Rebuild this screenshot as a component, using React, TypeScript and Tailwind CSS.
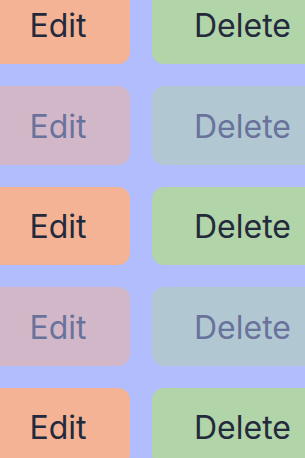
const rows = [false, true, false, true, false];

export default function App() {
  return (
    <div
      className="h-[458px] w-[305px] overflow-hidden bg-[#b1bdfd]"
      style={{ fontFamily: "Inter, 'Noto Sans', sans-serif" }}
    >
      <div className="-ml-[14px] -mt-[14.5px] flex flex-col gap-[22px]">
        {rows.map((disabled, i) => (
          <div key={i} className={`flex gap-[22px] ${disabled ? "opacity-50" : ""}`}>
            <button
              disabled={disabled}
              className="flex h-[78.5px] w-[144px] shrink-0 items-center justify-center rounded-[12px] bg-[#f4b394] pt-[3px] text-[32px] text-[#232a3c]"
            >
              Edit
            </button>
            <button
              disabled={disabled}
              className="flex h-[78.5px] w-[181px] shrink-0 items-center justify-center rounded-[12px] bg-[#b2d4a9] pt-[3px] text-[32px] text-[#232a3c]"
            >
              Delete
            </button>
          </div>
        ))}
      </div>
    </div>
  );
}
